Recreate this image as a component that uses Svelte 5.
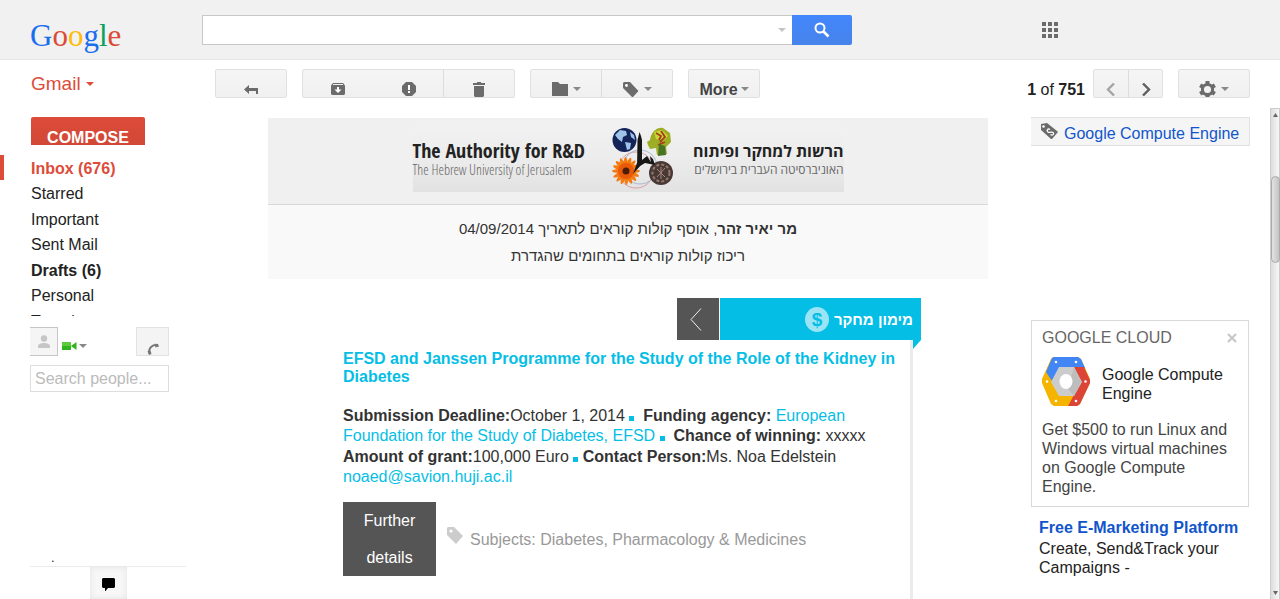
<script lang="ts">
	const folders = [
		{ name: 'Inbox (676)', active: true, bold: true },
		{ name: 'Starred' },
		{ name: 'Important' },
		{ name: 'Sent Mail' },
		{ name: 'Drafts (6)', bold: true },
		{ name: 'Personal' },
		{ name: 'Travel' },
	];

	const dots = [0, 6, 12];

	let query = $state('');
	let people = $state('');
	let showAd = $state(true);
</script>

{#snippet caret()}
	<svg class="caret" width="8" height="4" viewBox="0 0 8 4" aria-hidden="true"><path d="M0 0h8L4 4z" fill="currentColor" /></svg>
{/snippet}

<div class="app">
	<header>
		<a class="logo" href="#home" aria-label="Google"><span class="blue">G</span><span class="red">o</span><span class="yellow">o</span><span class="blue">g</span><span class="green">l</span><span class="red">e</span></a>
		<form class="search" onsubmit={(e) => e.preventDefault()}>
			<div class="search-box">
				<input type="text" aria-label="Search mail" bind:value={query} />
				<button type="button" class="options" aria-label="Search options">{@render caret()}</button>
			</div>
			<button class="search-button" aria-label="Search">
				<svg width="16" height="16" viewBox="0 0 16 16"><circle cx="6" cy="6" r="4.500" fill="none" stroke="#fff" stroke-width="2" /><path d="M9.500 9.500l5 5" stroke="#fff" stroke-width="2.600" /></svg>
			</button>
		</form>
		<button class="apps" aria-label="Apps">
			<svg width="16" height="16" viewBox="0 0 16 16" fill="#6b6b6b">
				{#each dots as y}
					{#each dots as x}
						<rect {x} {y} width="4" height="4" />
					{/each}
				{/each}
			</svg>
		</button>
	</header>

	<div class="body">
		<aside class="sidebar">
			<button class="gmail">Gmail {@render caret()}</button>
			<button class="compose">COMPOSE</button>
			<nav>
				<ul>
					{#each folders as folder}
						<li class:active={folder.active} class:bold={folder.bold}><a href="#folder">{folder.name}</a></li>
					{/each}
				</ul>
			</nav>
			<div class="chat">
				<div class="chat-top">
					<button class="avatar" aria-label="Profile">
						<svg width="14" height="14" viewBox="0 0 14 14" fill="#c6c6c6"><circle cx="7" cy="3.500" r="3.200" /><path d="M1 13v-2c0-4 12-4 12 0v2z" /></svg>
					</button>
					<button class="status" aria-label="Status">
						<svg width="15" height="8" viewBox="0 0 15 8"><path d="M0 0h9v8H0z" fill="#2fb41c" /><path d="M0 0h9v4H0z" fill="#5ccb3b" /><path d="M9 4l5.500-4v8z" fill="#2fb41c" /></svg>
						{@render caret()}
					</button>
					<button class="phone" aria-label="Call">
						<svg width="12" height="12" viewBox="0 0 12 12"><path d="M2 10.500C1.500 5 5 1.500 10.500 2" fill="none" stroke="#777" stroke-width="1.800" /><path d="M0.500 8l3-.5 1 3.500-2.500 1zM7.500.8L11 1l1 2.500-3.500 1z" fill="#777" /></svg>
					</button>
				</div>
				<input type="text" aria-label="Search people" placeholder="Search people..." bind:value={people} />
			</div>
			<div class="chat-bottom">
				<span class="stop">.</span>
				<div class="tabs">
					<button aria-label="Chats">
						<svg width="13" height="13" viewBox="0 0 13 13"><path d="M1 0h11l1 1v8l-1 1H6l-2.500 3H3v-3H1L0 9V1z" /></svg>
					</button>
				</div>
			</div>
		</aside>

		<div class="content">
			<div class="toolbar">
				<div class="group">
					<button aria-label="Back"><svg width="14" height="11" viewBox="0 0 14 11" fill="#6b6b6b"><path d="M0 5.500L5 1v3h9v6h-2V7H5v3z" /></svg></button>
				</div>
				<div class="group">
					<button aria-label="Archive"><svg width="14" height="12" viewBox="0 0 14 12"><path d="M2 0h10l2 2.500V11l-1 1H1l-1-1V2.500z" fill="#6b6b6b" /><path d="M2 1.500h10" stroke="#eee" /><path d="M6 4h2v2.500h2.500L7 10 3.500 6.500H6z" fill="#fff" /></svg></button>
					<button class="hover" aria-label="Report spam"><svg width="14" height="14" viewBox="0 0 14 14"><path d="M4 0h6l4 4v6l-4 4H4l-4-4V4z" fill="#6b6b6b" /><path d="M6 3h2v5H6zM6 9h2v2H6z" fill="#fff" /></svg></button>
					<button aria-label="Delete"><svg width="12" height="15" viewBox="0 0 12 15" fill="#6b6b6b"><path d="M4 0h4v1h4v2H0V1h4zM1 4h10v10l-1 1H2l-1-1z" /></svg></button>
				</div>
				<div class="group">
					<button aria-label="Move to"><svg width="16" height="14" viewBox="0 0 16 14" fill="#6b6b6b"><path d="M0 0h6l2 2h8v12H0z" /></svg>{@render caret()}</button>
					<button aria-label="Labels"><svg width="16" height="15" viewBox="0 0 16 15"><path d="M1 0h6l8 8.500v1L10 15H9L0 6V1z" fill="#6b6b6b" /><circle cx="3.500" cy="3.500" r="1.400" fill="#fff" /></svg>{@render caret()}</button>
				</div>
				<div class="group">
					<button class="more">More{@render caret()}</button>
				</div>
				<span class="count"><b>1</b> of <b>751</b></span>
				<div class="group pager">
					<button class="newer" aria-label="Newer"><svg width="10" height="13" viewBox="0 0 10 13" fill="none" stroke="#a5a5a5" stroke-width="2.400"><path d="M8 .5L2 6.500l6 6" /></svg></button>
					<button aria-label="Older"><svg width="10" height="13" viewBox="0 0 10 13" fill="none" stroke="#606060" stroke-width="2.400"><path d="M2 .5l6 6-6 6" /></svg></button>
				</div>
				<div class="group">
					<button aria-label="Settings"><svg width="17" height="17" viewBox="-8.500 -8.500 17 17"><g fill="#6b6b6b"><rect x="-2" y="-8.500" width="4" height="17" /><rect x="-2" y="-8.500" width="4" height="17" transform="rotate(60)" /><rect x="-2" y="-8.500" width="4" height="17" transform="rotate(120)" /><circle r="6.600" /></g><circle r="3.600" fill="#f2f2f2" /></svg>{@render caret()}</button>
				</div>
			</div>

			<div class="reader">
				<main>
					<div class="banner">
						<div class="masthead">
							<div class="en">
								<strong>The Authority for R&amp;D</strong>
								<span>The Hebrew University of Jerusalem</span>
							</div>
							<svg class="emblem" width="62" height="62" viewBox="0 0 62 62" aria-hidden="true">
								<circle cx="24" cy="43" r="18" fill="none" stroke="#d9a0a8" />
								<circle cx="28" cy="40" r="17" fill="none" stroke="#a9b9cc" />
								<circle cx="12.500" cy="13" r="12" fill="#142459" />
								<path d="M3 8l5-5 6 1 1 4-4 2-1 5-4-3zM13 15l6 1-1 6-3 1zM18 5l4 3 1 5-4-3z" fill="#9fc3e6" />
								<g fill="#f47a12">
									{#each [0, 22, 44, 66, 88, 110, 132, 154] as angle}
										<ellipse cx="14" cy="44" rx="14" ry="2.600" transform="rotate({angle} 14 44)" />
									{/each}
								</g>
								<circle cx="14" cy="44" r="8" fill="#e85a07" />
								<circle cx="14" cy="44" r="3.500" fill="#4b1d08" />
								<path d="M36 18l-1-3 3-2c1-8 7-13 13-12l7 5 1 9-5 5 1 7-10 1-1-7-6 1z" fill="#9dad24" />
								<path d="M42 5l8-2 6 6-5 5-7-2z" fill="#c9d832" />
								<path d="M44 6l5 3-2 4M49 4l4 6-5 5M46 18l7-3" stroke="#a83d20" stroke-width="1.800" fill="none" />
								<path d="M47 17l6 2 1 9-8 1z" fill="#467326" />
								<circle cx="49" cy="46" r="12" fill="#493936" />
								<circle cx="49" cy="46" r="8.500" fill="none" stroke="#977a6c" stroke-width="2" stroke-dasharray="3 2" />
								<path d="M45 42l8 8M53 41l-8 9M49 40v12" stroke="#a88979" />
								<path d="M25.500 13l1-4 1-4 1.500 4 1 4v24l-5 5z" fill="#171717" />
								<path d="M30 33l5-4 4 6-1-6 3 3 2 6-10-2-5 3-7 8 4-11z" fill="#171717" />
							</svg>
							<div class="he" dir="rtl" lang="he">
								<strong>הרשות למחקר ופיתוח</strong>
								<span>האוניברסיטה העברית בירושלים</span>
							</div>
						</div>
					</div>
					<div class="intro" dir="rtl" lang="he">
						<p><b>מר יאיר זהר</b>, אוסף קולות קוראים לתאריך 04/09/2014</p>
						<p>ריכוז קולות קוראים בתחומים שהגדרת</p>
					</div>

					<section class="digest">
						<div class="ribbon">
							<button class="back" aria-label="Previous"><svg width="12" height="23" viewBox="0 0 12 23" fill="none" stroke="#eee"><path d="M11 .5L1 11.500l10 11" /></svg></button>
							<h2 dir="rtl" lang="he">מימון מחקר <span class="coin">$</span></h2>
						</div>
						<article>
							<h3><a href="#programme">EFSD and Janssen Programme for the Study of the Role of the Kidney in Diabetes</a></h3>
							<p><b>Submission Deadline:</b>October 1, 2014 <i class="dot"></i>&nbsp; <b>Funding agency:</b> <a href="#efsd">European Foundation for the Study of Diabetes, EFSD</a> <i class="dot"></i>&nbsp; <b>Chance of winning:</b> xxxxx</p>
							<p class="grant"><b>Amount of grant:</b>100,000 Euro <i class="dot"></i> <b>Contact Person:</b>Ms. Noa Edelstein <a href="#mail">noaed@savion.huji.ac.il</a></p>
							<div class="foot">
								<a class="details" href="#details">Further details</a>
								<svg width="16" height="17" viewBox="0 0 16 17"><path d="M1 0h6l9 9-7 8-9-9V1z" fill="#ccc" /><circle cx="4" cy="4" r="1.600" fill="#fff" /></svg>
								<span>Subjects: Diabetes, Pharmacology &amp; Medicines</span>
							</div>
						</article>
					</section>
				</main>

				<aside class="side">
					<a class="label" href="#gce">
						<svg width="18" height="17" viewBox="0 0 18 17"><path d="M1 1l6-1 10 8 1 1-6 7h-1L1 7z" fill="#6b6b6b" /><circle cx="3.500" cy="3.500" r="1.300" fill="#fff" /><path d="M10 6.500c-2-1.500-4 1-2 2.500s3.500-1 5 .5-.5 3.500-2.500 2" fill="none" stroke="#fff" stroke-width="1.300" /></svg>
						Google Compute Engine
					</a>
					<div class="ads">
						{#if showAd}
							<div class="card">
								<div class="card-head">
									<span>GOOGLE CLOUD</span>
									<button aria-label="Close" onclick={() => (showAd = false)}>
										<svg width="10" height="10" viewBox="0 0 10 10" stroke="#c8c8c8" stroke-width="2.200"><path d="M1 1l8 8M9 1L1 9" /></svg>
									</button>
								</div>
								<div class="product">
									<svg width="48" height="49" viewBox="0 0 48 49">
										<path d="M11 0h25l3 2 9 20v4l-10 21-3 2H12l-3-2L0 26v-4L9 2z" fill="#f4b400" />
										<path d="M4 15L10 1l2-1h24l3 2 4 9-11-1-14 1-8 13z" fill="#4285f4" />
										<path d="M32 10h10l6 13v3L38 47l-3 2h-9l13-24z" fill="#db4437" />
										<path d="M17 10h15l8 15-8 14H17L9 25z" fill="#ccc" />
										<path d="M32 10l7 15-7 14-6-7z" fill="#bdbdbd" />
										<ellipse cx="24" cy="24.500" rx="6.500" ry="7.500" fill="#fff" />
										<g fill="#fff"><circle cx="14" cy="5" r="1.300" /><circle cx="34" cy="5" r="1.300" /><circle cx="5" cy="24.500" r="1.300" /><circle cx="43.500" cy="24.500" r="1.300" /><circle cx="14" cy="44" r="1.300" /><circle cx="34" cy="44" r="1.300" /></g>
									</svg>
									<span>Google Compute Engine</span>
								</div>
								<p>Get $500 to run Linux and Windows virtual machines on Google Compute Engine.</p>
							</div>
						{/if}
						<div class="text-ad">
							<a href="#ad">Free E-Marketing Platform</a>
							<p>Create, Send&amp;Track your Campaigns -</p>
						</div>
					</div>
				</aside>

				<div class="scrollbar" aria-hidden="true">
					<svg width="5" height="4" viewBox="0 0 5 4"><path d="M2.500 0L5 4H0z" fill="#666" /></svg>
					<div class="thumb"></div>
					<svg width="5" height="4" viewBox="0 0 5 4"><path d="M2.500 4L5 0H0z" fill="#666" /></svg>
				</div>
			</div>
		</div>
	</div>
</div>

<style>
	:global(body) {
		background: #fff;
	}
	.app {
		height: 100vh;
		display: flex;
		flex-direction: column;
		overflow: hidden;
		font-family: "Liberation Sans", Arial, sans-serif;
		font-size: 16px;
		line-height: 19px;
		color: #222;
	}
	* {
		box-sizing: border-box;
	}
	button, input {
		font: inherit;
		margin: 0;
		padding: 0;
		border: none;
		background: none;
		color: inherit;
	}
	button {
		cursor: pointer;
	}
	a {
		text-decoration: none;
		color: inherit;
	}
	p, h2, h3, ul {
		margin: 0;
		padding: 0;
	}
	svg {
		display: block;
		flex: none;
	}

	/* top bar */
	header {
		flex: none;
		height: 60px;
		display: flex;
		align-items: center;
		background: #f1f1f1;
		border-bottom: 1px solid #e5e5e5;
	}
	.logo {
		width: 202px;
		padding: 12px 0 0 30px;
		font-family: "Liberation Serif", serif;
		font-size: 31px;
		line-height: 36px;
	}
	.blue { color: #1a6dee; }
	.red { color: #db4a37; }
	.yellow { color: #fcbd06; }
	.green { color: #0ba05b; }
	.search {
		flex: 0 1 650px;
		display: flex;
		height: 30px;
	}
	.search-box {
		flex: 1;
		display: flex;
		background: #fff;
		border: 1px solid #c8c8c8;
		border-right: none;
	}
	.search-box input {
		flex: 1;
		min-width: 0;
		padding: 0 8px;
		outline: none;
	}
	.options {
		width: 20px;
		padding-left: 6px;
		color: #c4c4c4;
	}
	.search-button {
		width: 60px;
		display: flex;
		align-items: center;
		justify-content: center;
		background: linear-gradient(#4387fd, #4683ea);
		border-radius: 0 2px 2px 0;
	}
	.apps {
		margin: 0 222px 0 auto;
	}

	.body {
		flex: 1;
		min-height: 0;
		display: flex;
	}

	/* left column */
	.sidebar {
		width: 202px;
		flex: none;
		display: flex;
		flex-direction: column;
		align-items: flex-start;
	}
	.gmail {
		display: flex;
		align-items: center;
		gap: 5px;
		margin: 13px 0 0 31px;
		font-size: 19px;
		line-height: 22px;
		color: #dd4b39;
	}
	.compose {
		flex: none;
		margin: 22px 0 0 31px;
		width: 114px;
		height: 28px;
		padding-top: 11px;
		overflow: hidden;
		background: linear-gradient(#dd4b39, #d14836);
		border-radius: 2px 2px 0 0;
		color: #fff;
		font-weight: bold;
	}
	nav {
		flex: none;
		width: 100%;
		height: 161px;
		margin-top: 10px;
		overflow: hidden;
	}
	li {
		list-style: none;
		height: 25px;
		line-height: 27px;
		padding-left: 31px;
	}
	li:nth-child(even) {
		height: 26px;
	}
	.bold {
		font-weight: bold;
	}
	.active {
		padding-left: 27px;
		border-left: 4px solid #dd4b39;
		color: #dd4b39;
	}
	.chat {
		width: 139px;
		margin: 11px 0 0 30px;
	}
	.chat-top {
		display: flex;
		align-items: flex-start;
	}
	.avatar {
		width: 28px;
		height: 29px;
		display: flex;
		align-items: center;
		justify-content: center;
		background: #f5f5f5;
		border: 1px solid #c6c6c6;
		border-left: none;
	}
	.status {
		display: flex;
		align-items: center;
		gap: 2px;
		padding: 15px 0 0 4px;
		color: #888;
	}
	.phone {
		width: 33px;
		height: 29px;
		margin-left: auto;
		padding: 14px 0 0 10px;
		background: #f4f4f4;
		border: 1px solid #e2e2e2;
	}
	.chat input {
		width: 100%;
		height: 27px;
		margin-top: 9px;
		padding: 0 4px;
		background: #fff;
		border: 1px solid #ddd;
	}
	.chat input::placeholder {
		color: #bbb;
		opacity: 1;
	}
	.chat-bottom {
		width: 156px;
		margin: auto 0 0 30px;
	}
	.stop {
		padding-left: 21px;
		font-size: 13px;
		line-height: 16px;
	}
	.tabs {
		display: flex;
		padding-left: 60px;
		border-top: 1px solid #ebebeb;
	}
	.tabs button {
		width: 37px;
		height: 32px;
		padding: 3px 0 0 12px;
		background: #f7f7f7;
		box-shadow: inset 0 0 6px #e3e3e3;
	}

	/* toolbar */
	.content {
		flex: 1;
		min-width: 0;
		display: flex;
		flex-direction: column;
	}
	.toolbar {
		flex: none;
		height: 48px;
		display: flex;
		align-items: flex-start;
		gap: 15px;
		padding: 9px 30px 0 13px;
	}
	.group {
		display: flex;
		height: 29px;
		border: 1px solid #e0e0e0;
		border-radius: 2px;
		background: linear-gradient(#f5f5f5, #f0f0f0);
		overflow: hidden;
	}
	.group button {
		width: 70px;
		height: 38px;
		display: flex;
		align-items: center;
		justify-content: center;
		color: #888;
	}
	.group button + button {
		width: 71px;
		border-left: 1px solid #dcdcdc;
	}
	.group button .caret {
		margin-left: 5px;
	}
	.group .more {
		color: #444;
		font-weight: bold;
	}
	.group .more .caret {
		margin-left: 3px;
		color: #888;
	}
	.group button.hover {
		width: 70px;
		border-left-color: transparent;
	}
	.pager {
		margin-left: -7px;
	}
	.group.pager button {
		width: 34px;
	}
	.count {
		margin-left: auto;
		padding-top: 11px;
		white-space: nowrap;
	}

	/* message */
	.reader {
		flex: 1;
		min-height: 0;
		display: flex;
	}
	main {
		flex: 1;
		min-width: 0;
		display: flex;
		flex-direction: column;
		padding: 10px 43px 0 66px;
		overflow: hidden;
	}
	.banner {
		flex: none;
		height: 87px;
		padding-top: 9px;
		background: #f0f0f0;
		border-bottom: 1px solid #d8d8d8;
	}
	.masthead {
		width: 431px;
		height: 65px;
		margin: 0 auto;
		display: flex;
		justify-content: space-between;
		background: linear-gradient(#f1f1f1, #ececec 50%, #e2e2e2);
	}
	.en, .he {
		display: flex;
		flex-direction: column;
		padding-top: 13px;
		font-family: "Open Sans Condensed", "Liberation Sans Narrow", "Open Sans", sans-serif;
		white-space: nowrap;
		color: #666;
		font-size: 14px;
		line-height: 15px;
	}
	.en {
		width: 175px;
	}
	.en span {
		font-family: "Open Sans Condensed Light", "Liberation Sans Narrow", "Open Sans Condensed", sans-serif;
		font-weight: 300;
	}
	.he {
		width: 149px;
		font-size: 12px;
	}
	.masthead strong {
		font-size: 20px;
		line-height: 22px;
		color: #222;
	}
	.masthead .he strong {
		font-size: 16px;
	}
	.emblem {
		margin-left: 4px;
	}
	.intro {
		flex: none;
		padding: 10px 0 10px;
		background: #f9f9f9;
		text-align: center;
		font-size: 15px;
		line-height: 27px;
		color: #333;
	}
	.digest {
		flex: 1;
		display: flex;
		flex-direction: column;
		margin: 19px 67px 0 75px;
	}
	.ribbon {
		flex: none;
		display: flex;
		justify-content: flex-end;
		gap: 1px;
		height: 42px;
	}
	.back {
		width: 42px;
		padding-left: 13px;
		background: #555;
	}
	h2 {
		position: relative;
		width: 201px;
		display: flex;
		align-items: center;
		gap: 5px;
		padding: 0 8px;
		background: #05bee6;
		color: #fff;
		font-size: 15px;
	}
	h2::after {
		content: "";
		position: absolute;
		right: 0;
		top: 100%;
		border-top: 9px solid #05bee6;
		border-right: 8px solid transparent;
	}
	.coin {
		width: 24px;
		height: 25px;
		border-radius: 50%;
		background: #9be4f5;
		color: #05bee6;
		font-size: 19px;
		line-height: 25px;
		text-align: center;
	}
	article {
		flex: 1;
		margin-right: 8px;
		padding: 10px 10px 0 0;
		border-right: 3px solid #ebebeb;
		line-height: 20px;
		color: #333;
	}
	article a {
		color: #05bee6;
	}
	h3 {
		margin-bottom: 20px;
		font-size: 16px;
		line-height: 18px;
	}
	.grant {
		margin-top: 1px;
	}
	.dot {
		display: inline-block;
		width: 5px;
		height: 5px;
		background: #05bee6;
	}
	.foot {
		display: flex;
		align-items: center;
		margin-top: 15px;
		color: #999;
	}
	.foot svg {
		margin: 0 7px 8px 11px;
	}
	.foot span {
		padding-top: 2px;
	}
	article .details {
		width: 93px;
		padding: 0 18px;
		background: #555;
		color: #fff;
		line-height: 37px;
		text-align: center;
	}

	/* right column */
	.side {
		flex: none;
		width: 239px;
		padding: 9px 20px 0 0;
		overflow: hidden;
	}
	.label {
		display: flex;
		align-items: center;
		gap: 6px;
		height: 29px;
		padding: 3px 0 0 9px;
		background: #f5f5f5;
		border: 1px solid #e2e2e2;
		border-left: none;
		color: #15c;
		white-space: nowrap;
	}
	.label svg {
		margin-bottom: 3px;
	}
	.ads {
		margin-top: 174px;
	}
	.card {
		margin-right: 1px;
		padding: 7px 10px 10px;
		border: 1px solid #d9d9d9;
		color: #444;
	}
	.card-head {
		display: flex;
		justify-content: space-between;
		color: #666;
	}
	.card-head button {
		padding-right: 1px;
	}
	.product {
		display: flex;
		align-items: center;
		gap: 12px;
		margin: 10px 0 14px;
		color: #222;
	}
	.product span {
		padding-top: 4px;
	}
	.text-ad {
		padding: 11px 8px 0;
	}
	.text-ad a {
		color: #15c;
		font-weight: bold;
		white-space: nowrap;
	}
	.text-ad p {
		margin-top: 2px;
	}

	.scrollbar {
		flex: none;
		width: 10px;
		display: flex;
		flex-direction: column;
		align-items: center;
		padding: 4px 0;
		background: linear-gradient(90deg, #ddd, #f7f7f7);
		border: 1px solid #ccc;
		border-bottom: none;
	}
	.thumb {
		width: 9px;
		height: 87px;
		margin: 59px 0 auto;
		border: 1px solid #aaa;
		border-radius: 5px;
		background: linear-gradient(90deg, #e2e2e2, #c4c4c4);
	}
</style>
